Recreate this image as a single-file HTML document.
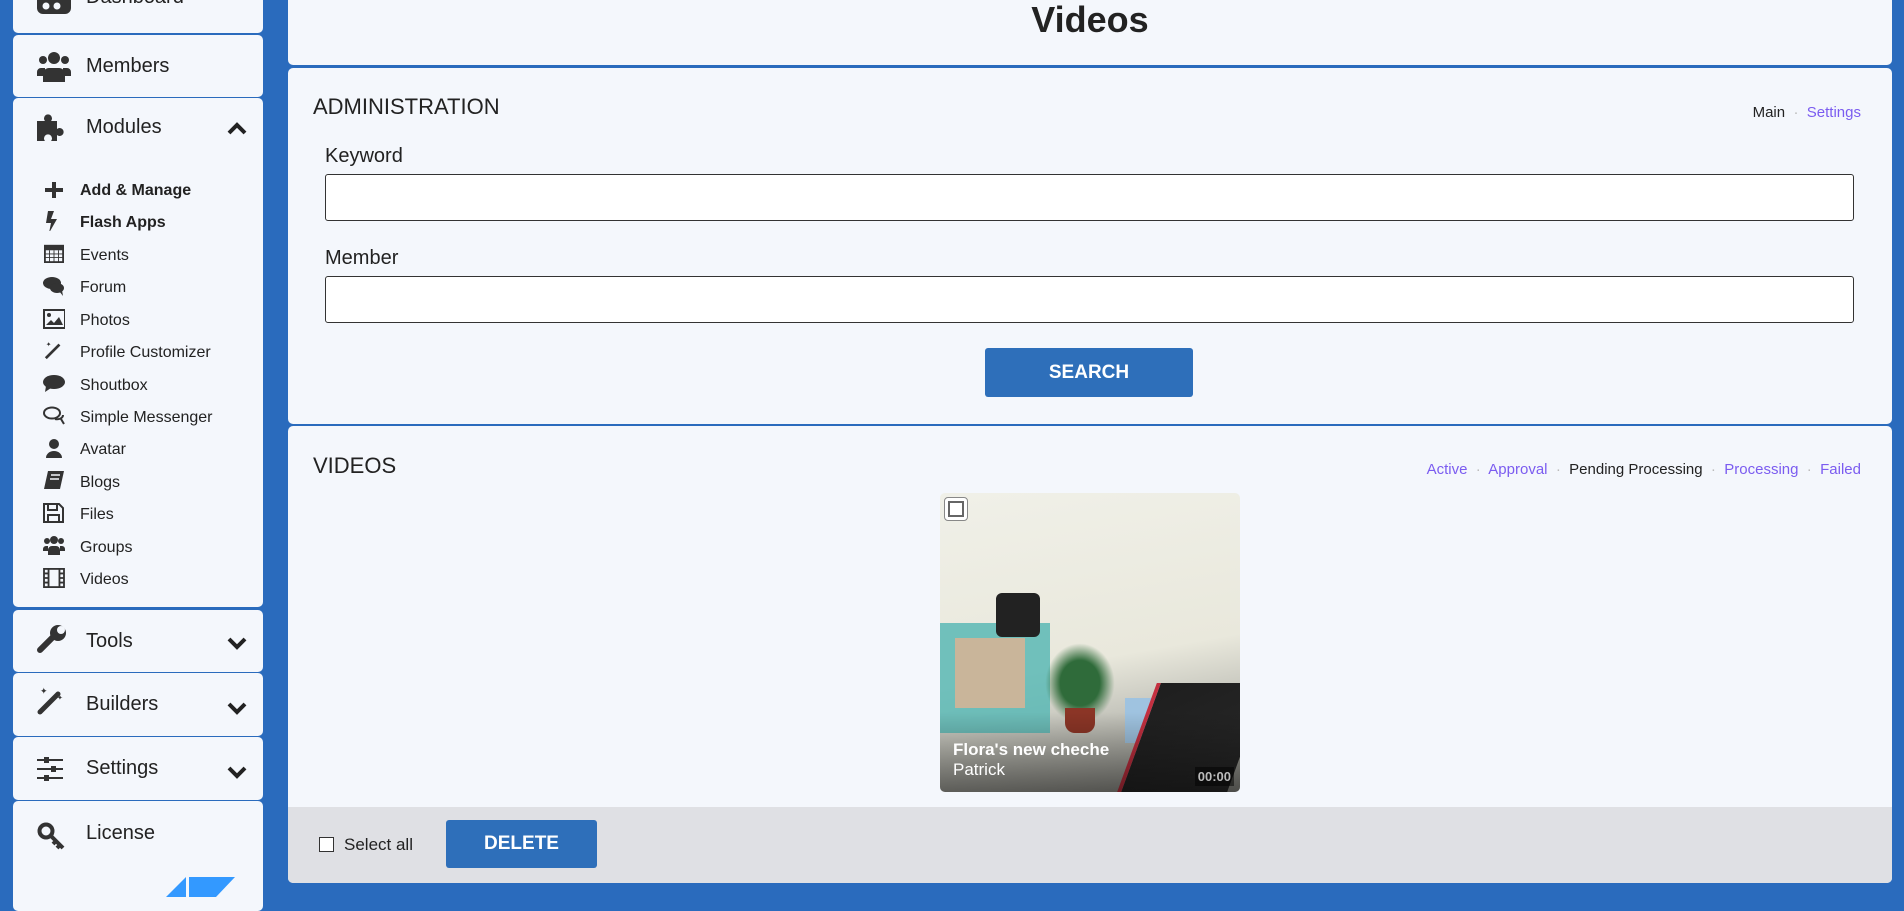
<!DOCTYPE html>
<html><head><meta charset="utf-8"><style>
*{box-sizing:border-box;margin:0;padding:0}
body{width:1904px;height:893px;overflow:hidden;background:#2a6bbd;font-family:"Liberation Sans",sans-serif;color:#222;position:relative}
.card{position:absolute;left:13px;width:250px;background:#f4f7fc;border-radius:5px}
.hd{position:absolute;left:73px;font-size:20px;color:#222}
.ic{position:absolute;left:24px}
.chev{position:absolute;left:214px}
.sub{position:absolute;left:80px;font-size:16px;color:#222}
.sic{position:absolute;left:43px;width:22px;height:20px}
.panel{position:absolute;left:288px;width:1604px;background:#f4f7fc;border-radius:5px}
.lbl{position:absolute;left:37px;font-size:20px;color:#222}
.inp{position:absolute;left:37px;width:1529px;height:47px;background:#fff;border:1px solid #333;border-radius:3px}
.btn{position:absolute;background:#2e6fba;color:#fff;font-weight:bold;font-size:19px;text-align:center;border-radius:3px}
.lk{color:#7b5cf0}
</style></head><body>
<!-- sidebar -->
<div class="card" style="top:-10px;height:43px">
<svg class="ic" style="top:4px" width="36" height="20" viewBox="0 0 36 20"><rect x="0" y="-4" width="34" height="24" rx="6" fill="#333"/><circle cx="9" cy="12" r="3.5" fill="#f4f7fc"/><circle cx="20" cy="12" r="3.5" fill="#f4f7fc"/></svg>
<div class="hd" style="top:-4px">Dashboard</div></div>
<div class="card" style="top:35px;height:62px">
<svg class="ic" style="top:15px" width="34" height="32" viewBox="0 0 34 32"><circle cx="17" cy="8" r="6" fill="#333"/><circle cx="6" cy="10" r="4" fill="#333"/><circle cx="28" cy="10" r="4" fill="#333"/><path d="M6 32v-8a6 6 0 0 1 6-6h10a6 6 0 0 1 6 6v8z" fill="#333"/><path d="M0 26v-4a4 4 0 0 1 4-4h4v8zM34 26v-4a4 4 0 0 0-4-4h-4v8z" fill="#333"/></svg>
<div class="hd" style="top:20px">Members</div></div>
<div class="card" style="top:98px;height:509px">
<svg class="ic" style="top:15px" width="30" height="28" viewBox="0 0 30 28"><path d="M0 8h8a4 4 0 1 1 6 0h6v8a4 4 0 1 1 0 6v6h-6a4 4 0 1 0-6 0H0z" fill="#333"/></svg>
<div class="hd" style="top:18px">Modules</div>
<svg class="chev" style="top:24px" width="20" height="14" viewBox="0 0 20 14"><path d="M2 11l8-8 8 8" stroke="#222" stroke-width="4" fill="none"/></svg>
</div>
<div class="card" style="top:610px;height:62px">
<svg class="ic" style="top:14px" width="30" height="30" viewBox="0 0 30 30"><path d="M3 26l13-13" stroke="#333" stroke-width="6" stroke-linecap="round"/><circle cx="21" cy="9" r="8" fill="#333"/><circle cx="24" cy="6" r="4" fill="#f4f7fc"/></svg>
<div class="hd" style="top:20px">Tools</div>
<svg class="chev" style="top:26px" width="20" height="14" viewBox="0 0 20 14"><path d="M2 3l8 8 8-8" stroke="#222" stroke-width="4" fill="none"/></svg></div>
<div class="card" style="top:673px;height:63px">
<svg class="ic" style="top:13px" width="30" height="30" viewBox="0 0 30 30"><path d="M3 26l18-18" stroke="#333" stroke-width="5" stroke-linecap="round"/><text x="3" y="8" font-size="9" fill="#333">✦</text><text x="20" y="14" font-size="7" fill="#333">✦</text></svg>
<div class="hd" style="top:20px">Builders</div>
<svg class="chev" style="top:28px" width="20" height="14" viewBox="0 0 20 14"><path d="M2 3l8 8 8-8" stroke="#222" stroke-width="4" fill="none"/></svg></div>
<div class="card" style="top:737px;height:63px">
<svg class="ic" style="top:20px" width="28" height="24" viewBox="0 0 28 24"><path d="M0 3h26M0 12h26M0 21h26" stroke="#333" stroke-width="2"/><rect x="7" y="0" width="5" height="6" fill="#333"/><rect x="14" y="9" width="5" height="6" fill="#333"/><rect x="7" y="18" width="5" height="6" fill="#333"/></svg>
<div class="hd" style="top:20px">Settings</div>
<svg class="chev" style="top:28px" width="20" height="14" viewBox="0 0 20 14"><path d="M2 3l8 8 8-8" stroke="#222" stroke-width="4" fill="none"/></svg></div>
<div class="card" style="top:801px;height:110px">
<svg class="ic" style="top:21px" width="30" height="30" viewBox="0 0 30 30"><circle cx="9" cy="9" r="6.5" stroke="#333" stroke-width="4" fill="none"/><path d="M13 13l13 13M19 19l-3 3M23 23l-3 3" stroke="#333" stroke-width="4"/></svg>
<div class="hd" style="top:21px">License</div>
<svg style="position:absolute;left:143px;top:76px" width="80" height="20"><path d="M10 20L30 0v20zM33 0h46L60 20H33z" fill="#3399ff"/></svg>
</div>
<!-- submodules -->
<div class="sub" style="top:182px;font-weight:bold">Add &amp; Manage</div>
<svg class="sic" style="top:180px" viewBox="0 0 22 20"><path d="M9 2h4v16H9zM2 8h18v4H2z" fill="#333"/></svg>
<div class="sub" style="top:214px;font-weight:bold">Flash Apps</div>
<svg class="sic" style="top:211px" viewBox="0 0 22 20"><path d="M5 0h6L8 8h6L6 22l2-10H3z" fill="#333"/></svg>
<div class="sub" style="top:247px">Events</div>
<svg class="sic" style="top:243px" viewBox="0 0 22 22"><rect x="1" y="3" width="20" height="18" fill="none" stroke="#333" stroke-width="2"/><rect x="1" y="3" width="20" height="5" fill="#333"/><path d="M1 12h20M1 16h20M6 8v13M11 8v13M16 8v13" stroke="#333"/></svg>
<div class="sub" style="top:279px">Forum</div>
<svg class="sic" style="top:276px" viewBox="0 0 22 20"><ellipse cx="9" cy="7" rx="9" ry="6" fill="#333"/><ellipse cx="14" cy="12" rx="7" ry="5" fill="#333"/><path d="M16 15l4 5-1-6z" fill="#333"/></svg>
<div class="sub" style="top:312px">Photos</div>
<svg class="sic" style="top:309px" viewBox="0 0 22 20"><rect x="1" y="1" width="21" height="18" fill="none" stroke="#333" stroke-width="2"/><circle cx="6" cy="6" r="2" fill="#333"/><path d="M3 16l5-5 3 3 5-6 4 8z" fill="#333"/></svg>
<div class="sub" style="top:344px">Profile Customizer</div>
<svg class="sic" style="top:340px" viewBox="0 0 22 22"><path d="M2 20L17 5" stroke="#333" stroke-width="3"/><text x="2" y="7" font-size="7" fill="#333">✦</text></svg>
<div class="sub" style="top:377px">Shoutbox</div>
<svg class="sic" style="top:374px" viewBox="0 0 22 20"><ellipse cx="11" cy="8" rx="11" ry="7" fill="#333"/><path d="M3 12l-1 6 6-4z" fill="#333"/></svg>
<div class="sub" style="top:409px">Simple Messenger</div>
<svg class="sic" style="top:406px" viewBox="0 0 22 20"><ellipse cx="9" cy="7" rx="8" ry="5.5" fill="none" stroke="#333" stroke-width="2"/><path d="M12 13c4 1 8-1 8-4M18 13l3 5" stroke="#333" stroke-width="2" fill="none"/></svg>
<div class="sub" style="top:441px">Avatar</div>
<svg class="sic" style="top:438px" viewBox="0 0 22 20"><circle cx="11" cy="6" r="5" fill="#333"/><path d="M3 20a8 7 0 0 1 16 0z" fill="#333"/></svg>
<div class="sub" style="top:474px">Blogs</div>
<svg class="sic" style="top:471px" viewBox="0 0 22 20"><path d="M5 0h16l-4 18H1z" fill="#333"/><path d="M8 4h9M7 8h9" stroke="#f4f7fc" stroke-width="1.5"/></svg>
<div class="sub" style="top:506px">Files</div>
<svg class="sic" style="top:503px" viewBox="0 0 22 20"><path d="M1 1h15l4 4v14H1z" fill="none" stroke="#333" stroke-width="2"/><rect x="5" y="1" width="9" height="6" fill="none" stroke="#333" stroke-width="2"/><rect x="5" y="12" width="11" height="7" fill="none" stroke="#333" stroke-width="2"/></svg>
<div class="sub" style="top:539px">Groups</div>
<svg class="sic" style="top:535px" viewBox="0 0 22 20"><circle cx="11" cy="5" r="4" fill="#333"/><circle cx="4" cy="6" r="3" fill="#333"/><circle cx="18" cy="6" r="3" fill="#333"/><path d="M5 20v-5a4 4 0 0 1 4-4h4a4 4 0 0 1 4 4v5zM0 16v-2a3 3 0 0 1 3-3h2v5zM22 16v-2a3 3 0 0 0-3-3h-2v5z" fill="#333"/></svg>
<div class="sub" style="top:571px">Videos</div>
<svg class="sic" style="top:568px" viewBox="0 0 24 22"><rect x="1" y="1" width="22" height="20" fill="none" stroke="#333" stroke-width="2"/><path d="M6 1v20M18 1v20M1 6h5M1 11h5M1 16h5M18 6h5M18 11h5M18 16h5" stroke="#333" stroke-width="2"/></svg>

<!-- main -->
<div class="panel" style="top:-6px;height:71px"><div style="position:absolute;left:0;width:100%;text-align:center;top:5px;font-size:36px;font-weight:bold">Videos</div></div>
<div class="panel" style="top:68px;height:356px">
<div style="position:absolute;left:25px;top:26px;font-size:22px">ADMINISTRATION</div>
<div style="position:absolute;right:31px;top:36px;font-size:15px">Main <span style="color:#bbb">&nbsp;·&nbsp;</span> <span class="lk">Settings</span></div>
<div class="lbl" style="top:77px">Keyword</div>
<div class="inp" style="top:106px"></div>
<div class="lbl" style="top:179px">Member</div>
<div class="inp" style="top:208px"></div>
<div class="btn" style="left:697px;top:280px;width:208px;height:49px;line-height:49px">SEARCH</div>
</div>
<div class="panel" style="top:426px;height:457px;overflow:hidden">
<div style="position:absolute;left:25px;top:27px;font-size:22px">VIDEOS</div>
<div style="position:absolute;right:31px;top:35px;font-size:15px"><span class="lk">Active</span><span style="color:#bbb"> &nbsp;·&nbsp; </span><span class="lk">Approval</span><span style="color:#bbb"> &nbsp;·&nbsp; </span>Pending Processing<span style="color:#bbb"> &nbsp;·&nbsp; </span><span class="lk">Processing</span><span style="color:#bbb"> &nbsp;·&nbsp; </span><span class="lk">Failed</span></div>
<div style="position:absolute;left:652px;top:67px;width:300px;height:299px;border-radius:5px;overflow:hidden;background:linear-gradient(170deg,#f0f0e8 0%,#e9e8dc 55%,#c9c9c0 70%,#8a8a84 100%)">
 <div style="position:absolute;left:0;top:130px;width:110px;height:110px;background:#5bb9b5;opacity:.85"></div>
 <div style="position:absolute;left:15px;top:145px;width:70px;height:70px;background:#c9b59a"></div>
 <div style="position:absolute;left:56px;top:100px;width:44px;height:44px;background:#222;border-radius:6px"></div>
 <div style="position:absolute;left:105px;top:150px;width:70px;height:80px;background:radial-gradient(#2f6b3a,#2f6b3a 40%,transparent 70%)"></div>
 <div style="position:absolute;left:125px;top:215px;width:30px;height:25px;background:#8b3526;border-radius:0 0 10px 10px"></div>
 <div style="position:absolute;left:185px;top:205px;width:32px;height:45px;background:#9fc3e0"></div>
 <div style="position:absolute;left:195px;top:190px;width:110px;height:120px;background:linear-gradient(150deg,#1e1e1e,#2a2a2a);transform:skewX(-20deg);border-left:4px solid #c43040"></div>
 <div style="position:absolute;left:0;bottom:0;width:100%;height:80px;background:linear-gradient(transparent,rgba(0,0,0,.45))"></div>
 <div style="position:absolute;left:13px;top:247px;color:#fff;font-weight:bold;font-size:17px">Flora's new cheche</div>
 <div style="position:absolute;left:13px;top:267px;color:#fff;font-size:17px">Patrick</div>
 <div style="position:absolute;right:6px;bottom:6px;background:rgba(0,0,0,.5);color:#bbb;font-weight:bold;font-size:13px;padding:2px 3px">00:00</div>
 <div style="position:absolute;left:4px;top:4px;width:24px;height:24px;background:#fff;border:1px solid #888;border-radius:4px"><div style="margin:3px;width:16px;height:16px;border:2px solid #666"></div></div>
</div>
<div style="position:absolute;left:0;top:381px;width:100%;height:76px;background:#dfe0e4">
 <div style="position:absolute;left:31px;top:30px;width:15px;height:15px;border:1px solid #333;background:#fff"></div>
 <div style="position:absolute;left:56px;top:28px;font-size:17px">Select all</div>
 <div class="btn" style="left:158px;top:13px;width:151px;height:48px;line-height:48px">DELETE</div>
</div>
</div>
</body></html>
